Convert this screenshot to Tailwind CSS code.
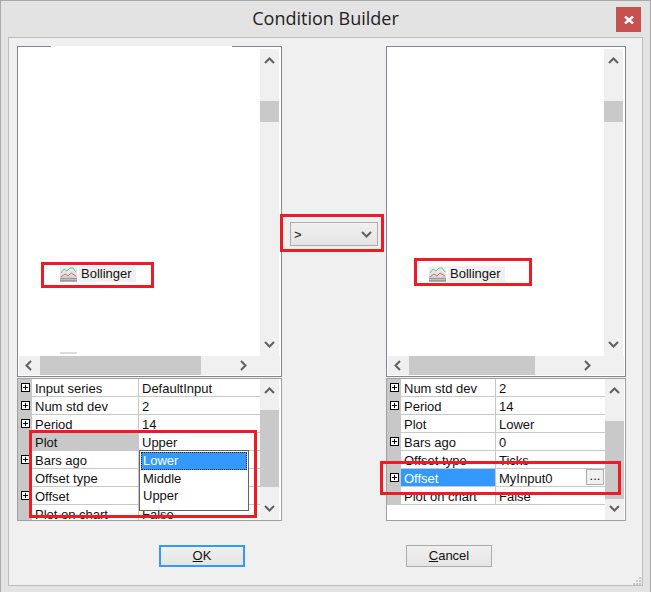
<!DOCTYPE html>
<html>
<head>
<meta charset="utf-8">
<script src="https://cdn.jsdelivr.net/npm/@tailwindcss/browser@4"></script>
</head>
<body class="bg-[#e3e3e3]">
<div class="relative w-[651px] h-[592px] bg-[#e3e3e3] border-t border-l border-r border-[#a9a9a9] overflow-hidden font-['Liberation_Sans',sans-serif] text-[13px] leading-[20px] text-[#111]">
  <!-- title bar -->
  <div class="relative h-[36px] flex items-center justify-center pb-[3px]">
    <span class="font-['Open_Sans',sans-serif] text-[18px] text-[#222]">Condition Builder</span>
    <div class="absolute left-[615px] top-[6px] w-[25px] h-[25px] bg-[#c75050] flex items-center justify-center">
      <svg width="10" height="8" viewBox="0 0 10 8"><path d="M1 0.5 L9 7.5 M9 0.5 L1 7.5" stroke="#fff" stroke-width="2.4" fill="none"/></svg>
    </div>
  </div>
  <!-- client area -->
  <div class="relative ml-[7px] w-[635px] h-[549px] bg-[#f0f0f0] border border-[#bcbcbc] pl-[8px] pt-[8px]">
    <div class="flex">
      <!-- left column -->
      <div class="w-[265px]">
        <div class="relative h-[331px] bg-white border border-[#828790] flex flex-col">
          <div class="absolute left-[33px] -top-px w-[181px] h-px bg-white"></div>
          <div class="flex flex-1 min-h-0">
            <div class="relative flex-1">
              <svg class="absolute left-[42px] top-[219px]" width="17" height="16" viewBox="0 0 17 16"><defs><linearGradient id="g1" x1="0" y1="0" x2="0" y2="1"><stop offset="0" stop-color="#f2f2f2"/><stop offset="0.6" stop-color="#dedede"/><stop offset="1" stop-color="#ababab"/></linearGradient></defs><rect width="17" height="16" fill="url(#g1)"/><path d="M0 12.5H17M0 14.5H17" stroke="#9a9a9a" stroke-width="1"/><path d="M1 7 L4 3 L7 5 L10 2 L13 2 L16 6" stroke="#6cc596" fill="none"/><path d="M1 11 L5 8 L8 10 L11 7 L16 10" stroke="#d96a6a" fill="none"/></svg>
              <span class="absolute left-[61px] top-[219px] w-[57px] h-[16px] leading-[16px] bg-[#f0f0f0] pl-[2px] text-[#111]">Bollinger</span>
              <div class="absolute left-[42px] top-[305px] w-[17px] h-[2px] bg-[#dcdcdc]"></div>
            </div>
            <div class="relative w-[19px] mr-[2px] mt-[2px] bg-[#f0f0f0] flex flex-col items-center justify-between py-[8px]">
              <svg width="11" height="7" viewBox="0 0 11 7"><path d="M1 6 L5.5 1.5 L10 6" stroke="#606060" stroke-width="2" fill="none"/></svg>
              <div class="absolute left-0 top-[52px] w-[19px] h-[21px] bg-[#c9c9c9]"></div>
              <svg width="11" height="7" viewBox="0 0 11 7"><path d="M1 1 L5.5 5.5 L10 1" stroke="#606060" stroke-width="2" fill="none"/></svg>
            </div>
          </div>
          <div class="h-[19px] mb-px mx-px bg-[#f0f0f0] flex items-center justify-between px-[6px] relative">
            <svg width="7" height="11" viewBox="0 0 7 11"><path d="M6 1 L1.5 5.5 L6 10" stroke="#606060" stroke-width="2" fill="none"/></svg>
            <svg class="mr-[27px]" width="7" height="11" viewBox="0 0 7 11"><path d="M1 1 L5.5 5.5 L1 10" stroke="#606060" stroke-width="2" fill="none"/></svg>
            <div class="absolute left-[21px] top-0 w-[161px] h-[19px] bg-[#c9c9c9]"></div>
          </div>
        </div>
        <div class="relative mt-px h-[143px] border border-[#a0a0a0] bg-white flex overflow-hidden">
          <div class="flex-1 overflow-hidden">
            <div class="h-[18px] flex border-b border-[#c8c8c8]"><div class="w-[14px] bg-[#c8c8c8] flex items-center justify-center"><svg width="9" height="9" viewBox="0 0 9 9"><rect x=".5" y=".5" width="8" height="8" fill="#fff" stroke="#000"/><path d="M2 4.5H7M4.5 2V7" stroke="#000"/></svg></div><div class="w-[107px] pl-[3px] border-r border-[#c8c8c8]">Input series</div><div class="flex-1 pl-[3px]">DefaultInput</div></div>
            <div class="h-[18px] flex border-b border-[#c8c8c8]"><div class="w-[14px] bg-[#c8c8c8] flex items-center justify-center"><svg width="9" height="9" viewBox="0 0 9 9"><rect x=".5" y=".5" width="8" height="8" fill="#fff" stroke="#000"/><path d="M2 4.5H7M4.5 2V7" stroke="#000"/></svg></div><div class="w-[107px] pl-[3px] border-r border-[#c8c8c8]">Num std dev</div><div class="flex-1 pl-[3px]">2</div></div>
            <div class="h-[18px] flex border-b border-[#c8c8c8]"><div class="w-[14px] bg-[#c8c8c8] flex items-center justify-center"><svg width="9" height="9" viewBox="0 0 9 9"><rect x=".5" y=".5" width="8" height="8" fill="#fff" stroke="#000"/><path d="M2 4.5H7M4.5 2V7" stroke="#000"/></svg></div><div class="w-[107px] pl-[3px] border-r border-[#c8c8c8]">Period</div><div class="flex-1 pl-[3px]">14</div></div>
            <div class="h-[18px] flex border-b border-[#c8c8c8]"><div class="w-[14px] bg-[#c8c8c8]"></div><div class="w-[107px] pl-[3px] bg-[#c8c8c8] border-r border-[#c8c8c8]">Plot</div><div class="flex-1 pl-[3px]">Upper</div></div>
            <div class="h-[18px] flex border-b border-[#c8c8c8]"><div class="w-[14px] bg-[#c8c8c8] flex items-center justify-center"><svg width="9" height="9" viewBox="0 0 9 9"><rect x=".5" y=".5" width="8" height="8" fill="#fff" stroke="#000"/><path d="M2 4.5H7M4.5 2V7" stroke="#000"/></svg></div><div class="w-[107px] pl-[3px] border-r border-[#c8c8c8]">Bars ago</div><div class="flex-1 pl-[3px]"></div></div>
            <div class="h-[18px] flex border-b border-[#c8c8c8]"><div class="w-[14px] bg-[#c8c8c8]"></div><div class="w-[107px] pl-[3px] border-r border-[#c8c8c8]">Offset type</div><div class="flex-1 pl-[3px]"></div></div>
            <div class="h-[18px] flex border-b border-[#c8c8c8]"><div class="w-[14px] bg-[#c8c8c8] flex items-center justify-center"><svg width="9" height="9" viewBox="0 0 9 9"><rect x=".5" y=".5" width="8" height="8" fill="#fff" stroke="#000"/><path d="M2 4.5H7M4.5 2V7" stroke="#000"/></svg></div><div class="w-[107px] pl-[3px] border-r border-[#c8c8c8]">Offset</div><div class="flex-1 pl-[3px]"></div></div>
            <div class="h-[18px] flex border-b border-[#c8c8c8]"><div class="w-[14px] bg-[#c8c8c8]"></div><div class="w-[107px] pl-[3px] border-r border-[#c8c8c8]">Plot on chart</div><div class="flex-1 pl-[3px]">False</div></div>
          </div>
          <div class="relative w-[19px] mr-[2px] bg-[#f0f0f0] flex flex-col items-center justify-between py-[8px]">
            <svg width="11" height="7" viewBox="0 0 11 7"><path d="M1 6 L5.5 1.5 L10 6" stroke="#606060" stroke-width="2" fill="none"/></svg>
            <div class="absolute left-0 top-[31px] w-[19px] h-[77px] bg-[#c9c9c9]"></div>
            <svg width="11" height="7" viewBox="0 0 11 7"><path d="M1 1 L5.5 5.5 L10 1" stroke="#606060" stroke-width="2" fill="none"/></svg>
          </div>
          <div class="absolute left-[121px] top-[71px] w-[110px] h-[61px] bg-white border border-[#646464]">
            <div class="h-[18px] mt-px mx-px bg-[#3399ff] text-white pl-[2px] leading-[18px] outline-1 outline-dotted outline-[#222] -outline-offset-1">Lower</div>
            <div class="h-[17px] leading-[17px] pl-[3px]">Middle</div>
            <div class="h-[17px] leading-[17px] pl-[3px]">Upper</div>
          </div>
        </div>
      </div>
      <!-- operator -->
      <div class="w-[104px] flex justify-center pt-[176px]">
        <div class="w-[88px] h-[24px] border border-[#acacac] bg-gradient-to-b from-[#f0f0f0] to-[#e5e5e5] flex items-center justify-between pl-[3px] pr-[5px]">
          <span class="pt-px">&gt;</span>
          <svg width="11" height="7" viewBox="0 0 11 7"><path d="M1 1 L5.5 5.5 L10 1" stroke="#606060" stroke-width="2" fill="none"/></svg>
        </div>
      </div>
      <!-- right column -->
      <div class="w-[240px]">
        <div class="relative h-[331px] bg-white border border-[#828790] flex flex-col">
          <div class="flex flex-1 min-h-0">
            <div class="relative flex-1">
              <svg class="absolute left-[42px] top-[219px]" width="17" height="16" viewBox="0 0 17 16"><rect width="17" height="16" fill="url(#g1)"/><path d="M0 12.5H17M0 14.5H17" stroke="#9a9a9a" stroke-width="1"/><path d="M1 7 L4 3 L7 5 L10 2 L13 2 L16 6" stroke="#6cc596" fill="none"/><path d="M1 11 L5 8 L8 10 L11 7 L16 10" stroke="#d96a6a" fill="none"/></svg>
              <span class="absolute left-[61px] top-[219px] w-[57px] h-[16px] leading-[16px] bg-[#f0f0f0] pl-[2px] text-[#111]">Bollinger</span>
            </div>
            <div class="relative w-[19px] mr-[2px] mt-[2px] bg-[#f0f0f0] flex flex-col items-center justify-between py-[8px]">
              <svg width="11" height="7" viewBox="0 0 11 7"><path d="M1 6 L5.5 1.5 L10 6" stroke="#606060" stroke-width="2" fill="none"/></svg>
              <div class="absolute left-0 top-[52px] w-[19px] h-[21px] bg-[#c9c9c9]"></div>
              <svg width="11" height="7" viewBox="0 0 11 7"><path d="M1 1 L5.5 5.5 L10 1" stroke="#606060" stroke-width="2" fill="none"/></svg>
            </div>
          </div>
          <div class="h-[19px] mb-px mx-px bg-[#f0f0f0] flex items-center justify-between px-[6px] relative">
            <svg width="7" height="11" viewBox="0 0 7 11"><path d="M6 1 L1.5 5.5 L6 10" stroke="#606060" stroke-width="2" fill="none"/></svg>
            <svg class="mr-[27px]" width="7" height="11" viewBox="0 0 7 11"><path d="M1 1 L5.5 5.5 L1 10" stroke="#606060" stroke-width="2" fill="none"/></svg>
            <div class="absolute left-[21px] top-0 w-[126px] h-[19px] bg-[#c9c9c9]"></div>
          </div>
        </div>
        <div class="relative mt-px h-[143px] border border-[#a0a0a0] bg-white flex overflow-hidden">
          <div class="flex-1 overflow-hidden">
            <div class="h-[18px] flex border-b border-[#c8c8c8]"><div class="w-[14px] bg-[#c8c8c8] flex items-center justify-center"><svg width="9" height="9" viewBox="0 0 9 9"><rect x=".5" y=".5" width="8" height="8" fill="#fff" stroke="#000"/><path d="M2 4.5H7M4.5 2V7" stroke="#000"/></svg></div><div class="w-[95px] pl-[3px] border-r border-[#c8c8c8]">Num std dev</div><div class="flex-1 pl-[3px]">2</div></div>
            <div class="h-[18px] flex border-b border-[#c8c8c8]"><div class="w-[14px] bg-[#c8c8c8] flex items-center justify-center"><svg width="9" height="9" viewBox="0 0 9 9"><rect x=".5" y=".5" width="8" height="8" fill="#fff" stroke="#000"/><path d="M2 4.5H7M4.5 2V7" stroke="#000"/></svg></div><div class="w-[95px] pl-[3px] border-r border-[#c8c8c8]">Period</div><div class="flex-1 pl-[3px]">14</div></div>
            <div class="h-[18px] flex border-b border-[#c8c8c8]"><div class="w-[14px] bg-[#c8c8c8]"></div><div class="w-[95px] pl-[3px] border-r border-[#c8c8c8]">Plot</div><div class="flex-1 pl-[3px]">Lower</div></div>
            <div class="h-[18px] flex border-b border-[#c8c8c8]"><div class="w-[14px] bg-[#c8c8c8] flex items-center justify-center"><svg width="9" height="9" viewBox="0 0 9 9"><rect x=".5" y=".5" width="8" height="8" fill="#fff" stroke="#000"/><path d="M2 4.5H7M4.5 2V7" stroke="#000"/></svg></div><div class="w-[95px] pl-[3px] border-r border-[#c8c8c8]">Bars ago</div><div class="flex-1 pl-[3px]">0</div></div>
            <div class="h-[18px] flex border-b border-[#c8c8c8]"><div class="w-[14px] bg-[#c8c8c8]"></div><div class="w-[95px] pl-[3px] border-r border-[#c8c8c8]">Offset type</div><div class="flex-1 pl-[3px]">Ticks</div></div>
            <div class="h-[18px] flex border-b border-[#c8c8c8]"><div class="w-[14px] bg-[#c8c8c8] flex items-center justify-center"><svg width="9" height="9" viewBox="0 0 9 9"><rect x=".5" y=".5" width="8" height="8" fill="#fff" stroke="#000"/><path d="M2 4.5H7M4.5 2V7" stroke="#000"/></svg></div><div class="w-[95px] pl-[3px] bg-[#3399ff] text-white border-r border-[#c8c8c8]">Offset</div><div class="flex-1 pl-[3px] flex justify-between pr-px"><span>MyInput0</span><span class="w-[18px] h-[16px] leading-[12px] text-center border border-[#acacac] bg-[#f0f0f0]">...</span></div></div>
            <div class="h-[18px] flex border-b border-[#c8c8c8]"><div class="w-[14px] bg-[#c8c8c8]"></div><div class="w-[95px] pl-[3px] border-r border-[#c8c8c8]">Plot on chart</div><div class="flex-1 pl-[3px]">False</div></div>
          </div>
          <div class="relative w-[19px] mr-px bg-[#f0f0f0] flex flex-col items-center justify-between py-[8px]">
            <svg width="11" height="7" viewBox="0 0 11 7"><path d="M1 6 L5.5 1.5 L10 6" stroke="#606060" stroke-width="2" fill="none"/></svg>
            <div class="absolute left-0 top-[42px] w-[19px] h-[78px] bg-[#c9c9c9]"></div>
            <svg width="11" height="7" viewBox="0 0 11 7"><path d="M1 1 L5.5 5.5 L10 1" stroke="#606060" stroke-width="2" fill="none"/></svg>
          </div>
        </div>
      </div>
    </div>
    <!-- buttons -->
    <div class="flex mt-[24px]">
      <div class="ml-[142px] w-[86px] h-[22px] border-2 border-[#3399ff] bg-gradient-to-b from-[#f0f0f0] to-[#e5e5e5] flex items-center justify-center"><span><span class="underline">O</span>K</span></div>
      <div class="ml-[161px] w-[86px] h-[22px] border border-[#acacac] bg-gradient-to-b from-[#f0f0f0] to-[#e5e5e5] flex items-center justify-center"><span><span class="underline">C</span>ancel</span></div>
    </div>
    <!-- resize grip -->
    <svg class="absolute right-0 bottom-0" width="10" height="10" viewBox="0 0 10 10"><path d="M7 2h2v2H7zM4 5h2v2H4zM7 5h2v2H7zM1 8h2v2H1zM4 8h2v2H4zM7 8h2v2H7z" fill="#c4c4c4"/></svg>
    <!-- red annotations -->
    <div class="absolute left-[32px] top-[224px] w-[113px] h-[26px] border-[3px] border-[#ed1c24]"></div>
    <div class="absolute left-[405px] top-[220px] w-[118px] h-[28px] border-[3px] border-[#ed1c24]"></div>
    <div class="absolute left-[271px] top-[176px] w-[104px] h-[38px] border-[3px] border-[#ed1c24]"></div>
    <div class="absolute left-[20px] top-[392px] w-[228px] h-[88px] border-[3px] border-[#ed1c24]"></div>
    <div class="absolute left-[371px] top-[423px] w-[241px] h-[34px] border-[3px] border-[#ed1c24]"></div>
  </div>
</div>
</body>
</html>
